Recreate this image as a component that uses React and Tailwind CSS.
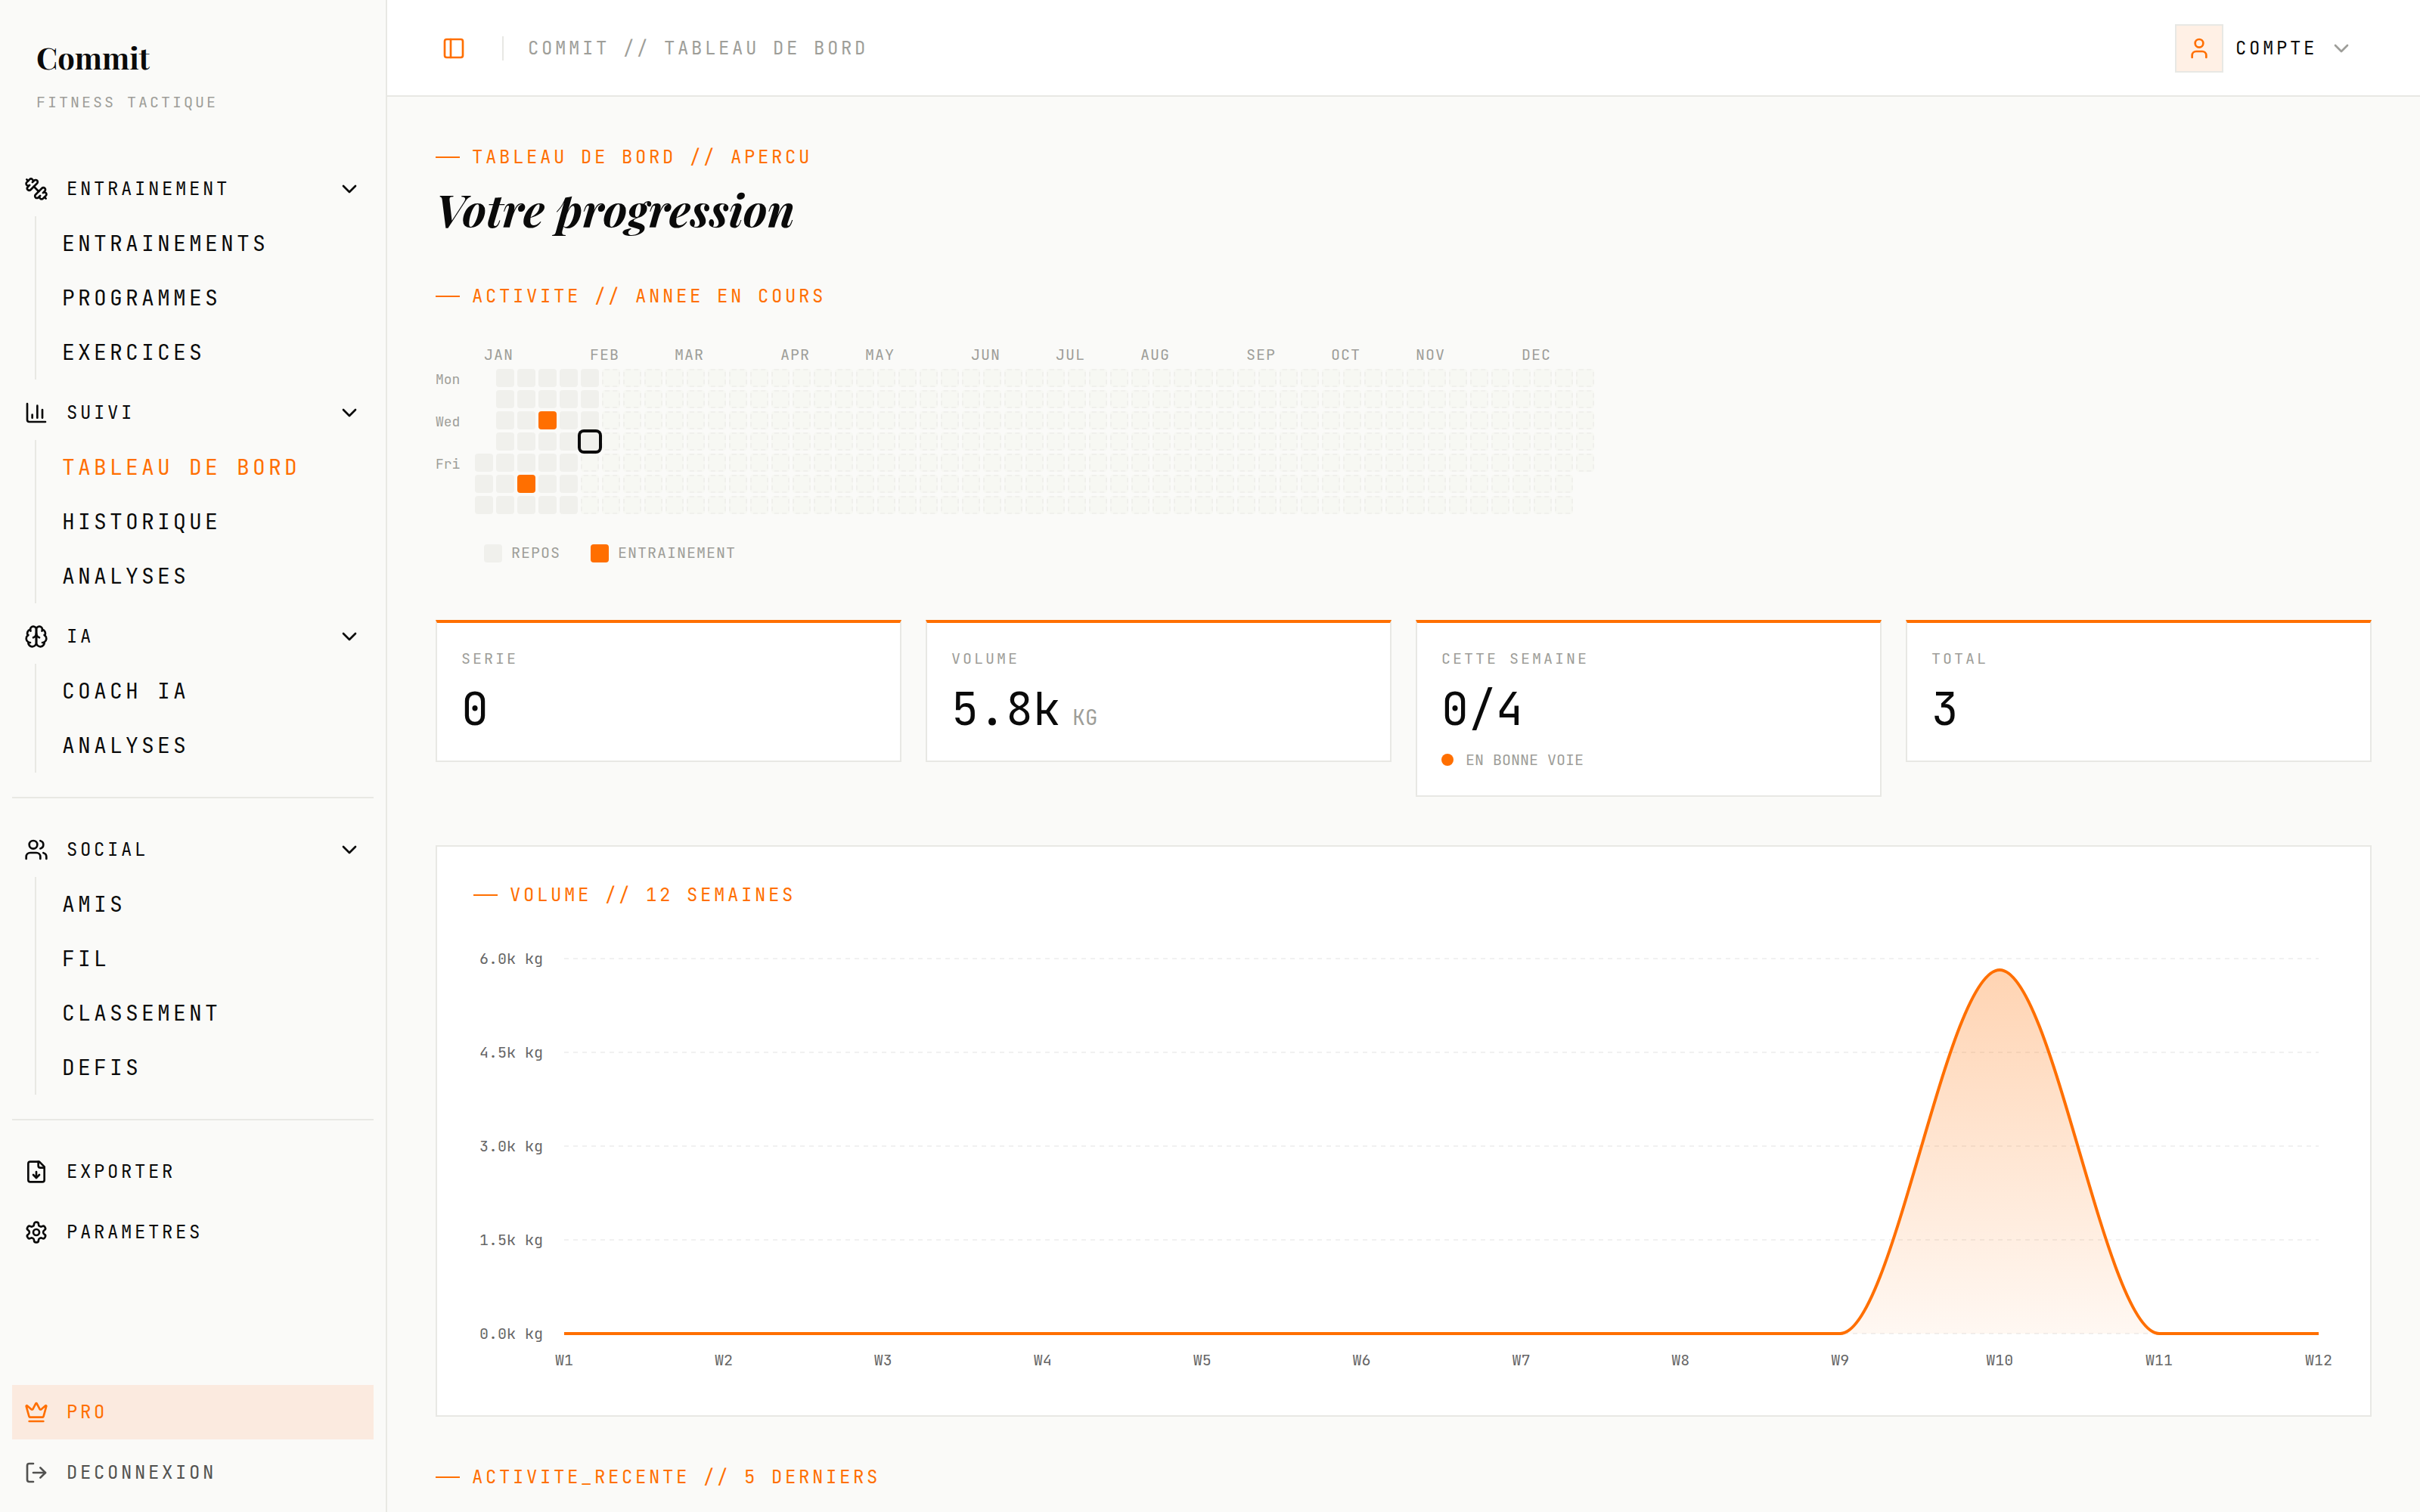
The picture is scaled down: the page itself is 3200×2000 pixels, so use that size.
import React from "react";
import { ChartColumn, ChevronDown, Crown, LogOut, PanelLeft, User, Users } from "lucide-react";

function Glyph({ size = 32, className, children }) {
  return (
    <svg
      width={size}
      height={size}
      viewBox="0 0 24 24"
      fill="none"
      stroke="currentColor"
      strokeWidth="2"
      strokeLinecap="round"
      strokeLinejoin="round"
      aria-hidden="true"
      className={className}
    >
      {children}
    </svg>
  );
}

function DumbbellIcon(props) {
  return (
    <Glyph {...props}>
      <path d="M14.4 14.4 9.6 9.6" />
      <path d="M18.657 21.485a2 2 0 1 1-2.829-2.828l-1.767 1.768a2 2 0 1 1-2.829-2.829l6.364-6.364a2 2 0 1 1 2.829 2.829l-1.768 1.767a2 2 0 1 1 2.828 2.829z" />
      <path d="m21.5 21.5-1.4-1.4" />
      <path d="M3.9 3.9 2.5 2.5" />
      <path d="M6.404 12.768a2 2 0 1 1-2.829-2.829l1.768-1.767a2 2 0 1 1-2.828-2.829l2.828-2.828a2 2 0 1 1 2.829 2.828l1.767-1.768a2 2 0 1 1 2.829 2.829z" />
    </Glyph>
  );
}

function BrainIcon(props) {
  return (
    <Glyph {...props}>
      <path d="M12 5a3 3 0 1 0-5.997.125 4 4 0 0 0-2.526 5.77 4 4 0 0 0 .556 6.588A4 4 0 1 0 12 18Z" />
      <path d="M12 5a3 3 0 1 1 5.997.125 4 4 0 0 1 2.526 5.77 4 4 0 0 1-.556 6.588A4 4 0 1 1 12 18Z" />
      <path d="M15 13a4.5 4.5 0 0 1-3-4 4.5 4.5 0 0 1-3 4" />
      <path d="M17.599 6.5a3 3 0 0 0 .399-1.375" />
      <path d="M6.003 5.125A3 3 0 0 0 6.401 6.5" />
      <path d="M3.477 10.896a4 4 0 0 1 .585-.396" />
      <path d="M19.938 10.5a4 4 0 0 1 .585.396" />
      <path d="M6 18a4 4 0 0 1-1.967-.516" />
      <path d="M19.967 17.484A4 4 0 0 1 18 18" />
    </Glyph>
  );
}

function FileDownIcon(props) {
  return (
    <Glyph {...props}>
      <path d="M15 2H6a2 2 0 0 0-2 2v16a2 2 0 0 0 2 2h12a2 2 0 0 0 2-2V7Z" />
      <path d="M14 2v4a2 2 0 0 0 2 2h4" />
      <path d="M12 18v-6" />
      <path d="m9 15 3 3 3-3" />
    </Glyph>
  );
}

function SettingsIcon(props) {
  return (
    <Glyph {...props}>
      <path d="M12.22 2h-.44a2 2 0 0 0-2 2v.18a2 2 0 0 1-1 1.73l-.43.25a2 2 0 0 1-2 0l-.15-.08a2 2 0 0 0-2.73.73l-.22.38a2 2 0 0 0 .73 2.73l.15.1a2 2 0 0 1 1 1.72v.51a2 2 0 0 1-1 1.74l-.15.09a2 2 0 0 0-.73 2.73l.22.38a2 2 0 0 0 2.73.73l.15-.08a2 2 0 0 1 2 0l.43.25a2 2 0 0 1 1 1.73V20a2 2 0 0 0 2 2h.44a2 2 0 0 0 2-2v-.18a2 2 0 0 1 1-1.73l.43-.25a2 2 0 0 1 2 0l.15.08a2 2 0 0 0 2.73-.73l.22-.39a2 2 0 0 0-.73-2.73l-.15-.08a2 2 0 0 1-1-1.74v-.5a2 2 0 0 1 1-1.74l.15-.09a2 2 0 0 0 .73-2.73l-.22-.38a2 2 0 0 0-2.73-.73l-.15.08a2 2 0 0 1-2 0l-.43-.25a2 2 0 0 1-1-1.73V4a2 2 0 0 0-2-2z" />
      <circle cx="12" cy="12" r="3" />
    </Glyph>
  );
}

const MAIN_GROUPS = [
  { label: "ENTRAINEMENT", icon: DumbbellIcon, items: ["ENTRAINEMENTS", "PROGRAMMES", "EXERCICES"] },
  { label: "SUIVI", icon: ChartColumn, items: ["TABLEAU DE BORD", "HISTORIQUE", "ANALYSES"] },
  { label: "IA", icon: BrainIcon, items: ["COACH IA", "ANALYSES"] },
];

const SOCIAL_GROUPS = [
  { label: "SOCIAL", icon: Users, items: ["AMIS", "FIL", "CLASSEMENT", "DEFIS"] },
];

const ACTIVE_ITEM = "TABLEAU DE BORD";

function NavGroup({ label, icon: Icon, items }) {
  return (
    <div>
      <button type="button" aria-expanded="true" className="flex h-[72px] w-full items-center gap-6 px-4 text-2xl tracking-[0.15em]">
        <Icon size={32} className="shrink-0" />
        <span className="flex-1 text-left">{label}</span>
        <ChevronDown size={32} className="shrink-0" />
      </button>
      <ul className="ml-[30px] border-l-2 border-[#e8e8e4] pl-[34px]">
        {items.map((item) => (
          <li key={item}>
            <a
              href="#"
              aria-current={item === ACTIVE_ITEM ? "page" : undefined}
              className="flex h-[72px] items-center text-[28px] tracking-[0.15em] whitespace-nowrap aria-[current=page]:text-[#ff6f00]"
            >
              {item}
            </a>
          </li>
        ))}
      </ul>
    </div>
  );
}

function NavLink({ label, icon: Icon, className = "" }) {
  return (
    <a href="#" className={"flex h-[72px] items-center gap-6 px-4 text-2xl tracking-[0.15em] " + className}>
      <Icon size={32} className="shrink-0" />
      <span>{label}</span>
    </a>
  );
}

function Divider() {
  return <hr className="my-8 border-t-2 border-[#e8e8e4]" />;
}

function Sidebar() {
  return (
    <aside className="sticky top-0 flex h-screen w-[512px] shrink-0 flex-col border-r-2 border-[#e8e8e4]">
      <div className="p-12">
        <div className="font-['Playfair_Display','Liberation_Serif',serif] text-[40px] leading-[56px] font-bold">Commit</div>
        <div className="mt-4 text-xl leading-[30px] tracking-[0.15em] text-[#9e9e99]">FITNESS TACTIQUE</div>
      </div>
      <nav className="flex flex-1 flex-col p-4">
        <div className="flex flex-col gap-2">
          {MAIN_GROUPS.map((g) => (
            <NavGroup key={g.label} {...g} />
          ))}
        </div>
        <Divider />
        {SOCIAL_GROUPS.map((g) => (
          <NavGroup key={g.label} {...g} />
        ))}
        <Divider />
        <div className="flex flex-col gap-2">
          <NavLink label="EXPORTER" icon={FileDownIcon} />
          <NavLink label="PARAMETRES" icon={SettingsIcon} />
        </div>
        <div className="mt-auto flex flex-col gap-2">
          <NavLink label="PRO" icon={Crown} className="bg-[#fbeadf] text-[#ff6f00]" />
          <NavLink label="DECONNEXION" icon={LogOut} className="text-[#525250]" />
        </div>
      </nav>
    </aside>
  );
}

function TopBar() {
  return (
    <header className="flex h-32 items-center justify-between bg-white px-16 shadow-[inset_0_-2px_0_#e8e8e4]">
      <div className="flex items-center">
        <button type="button" aria-label="Basculer le menu" className="flex size-12 items-center justify-center text-[#ff6f00]">
          <PanelLeft size={32} />
        </button>
        <div className="mr-8 ml-10 h-8 w-0.5 bg-[#e8e8e4]" />
        <span className="text-2xl tracking-[0.15em] text-[#9e9e99]">COMMIT // TABLEAU DE BORD</span>
      </div>
      <button type="button" className="flex items-center gap-4 pr-6 text-2xl tracking-[0.15em]">
        <span className="flex size-16 items-center justify-center border-2 border-[#e8e8e4] bg-[#fff0e5] text-[#ff6f00]">
          <User size={32} />
        </span>
        COMPTE
        <ChevronDown size={32} className="text-[#9e9e99]" />
      </button>
    </header>
  );
}

function Eyebrow({ as: Tag = "h2", children }) {
  return (
    <Tag className="flex items-center gap-4 text-2xl leading-8 tracking-[0.15em] text-[#ff6f00]">
      <span className="h-0.5 w-8 bg-[#ff6f00]" />
      {children}
    </Tag>
  );
}

const MONTHS = [
  ["JAN", 0],
  ["FEB", 5],
  ["MAR", 9],
  ["APR", 14],
  ["MAY", 18],
  ["JUN", 23],
  ["JUL", 27],
  ["AUG", 31],
  ["SEP", 36],
  ["OCT", 40],
  ["NOV", 44],
  ["DEC", 49],
];

const WEEKS = 53;
const FIRST_DAY = 4;
const LAST_DAY = 52 * 7 + 4;
const TODAY = 5 * 7 + 3;
const WORKOUTS = [3 * 7 + 2, 2 * 7 + 5];

const CELL_STYLES = {
  empty: "",
  workout: "bg-[#ff6f00]",
  today: "bg-[#f0f0ec] ring-4 ring-[#0a0a0a] z-10",
  rest: "bg-[#f0f0ec]",
  future: "bg-[#f7f8f3] border-2 border-dashed border-[#f0f0ec]",
};

function cellKind(day) {
  if (day < FIRST_DAY || day > LAST_DAY) return "empty";
  if (WORKOUTS.includes(day)) return "workout";
  if (day === TODAY) return "today";
  return day < TODAY ? "rest" : "future";
}

function Heatmap() {
  return (
    <div className="mt-12">
      <div className="ml-16 grid auto-cols-[24px] grid-flow-col gap-1 text-xl leading-[26px] tracking-[0.05em] text-[#9e9e99]">
        {MONTHS.map(([name, week]) => (
          <span key={name} className="whitespace-nowrap" style={{ gridColumnStart: week + 1 }}>
            {name}
          </span>
        ))}
      </div>
      <div className="mt-1.5 flex gap-2">
        <div className="grid w-11 grid-rows-[repeat(7,24px)] gap-1 text-lg leading-7 text-[#9e9e99]">
          <span>Mon</span>
          <span />
          <span>Wed</span>
          <span />
          <span>Fri</span>
        </div>
        <div className="grid auto-cols-[24px] grid-flow-col grid-rows-[repeat(7,24px)] gap-1">
          {Array.from({ length: WEEKS * 7 }, (_, day) => (
            <div key={day} className={"rounded-sm " + CELL_STYLES[cellKind(day)]} />
          ))}
        </div>
      </div>
      <div className="mt-10 ml-16 flex gap-10 text-xl leading-[22px] tracking-[0.05em] text-[#9e9e99]">
        <div className="flex gap-3">
          <span className="size-6 rounded-sm bg-[#f0f0ec]" />
          REPOS
        </div>
        <div className="flex gap-3">
          <span className="size-6 rounded-sm bg-[#ff6f00]" />
          ENTRAINEMENT
        </div>
      </div>
    </div>
  );
}

const STATS = [
  { label: "SERIE", value: "0" },
  { label: "VOLUME", value: "5.8k", unit: "KG" },
  { label: "CETTE SEMAINE", value: "0/4", note: "EN BONNE VOIE" },
  { label: "TOTAL", value: "3" },
];

function StatCard({ label, value, unit, note }) {
  return (
    <div className="border-2 border-t-4 border-[#e8e8e4] border-t-[#ff6f00] bg-white p-8">
      <div className="text-xl leading-[30px] tracking-[0.15em] text-[#9e9e99]">{label}</div>
      <div className="mt-4 flex items-baseline gap-4 text-6xl leading-[72px]">
        {value}
        {unit && <span className="text-[28px] leading-8 text-[#9e9e99]">{unit}</span>}
      </div>
      {note && (
        <div className="mt-4 flex items-center gap-4 text-xl leading-[30px] text-[#9e9e99]">
          <span className="size-4 rounded-full bg-[#ff6f00]" />
          {note}
        </div>
      )}
    </div>
  );
}

const PLOT = { left: 120, right: 2440, top: 44, bottom: 540 };
const VOLUMES = [0, 0, 0, 0, 0, 0, 0, 0, 0, 5820, 0, 0];
const TICKS = [6000, 4500, 3000, 1500, 0];

function xAt(i) {
  return PLOT.left + ((PLOT.right - PLOT.left) * i) / (VOLUMES.length - 1);
}

function yAt(v) {
  return PLOT.bottom - ((PLOT.bottom - PLOT.top) * v) / 6000;
}

function VolumeChart() {
  const third = (xAt(1) - xAt(0)) / 3;
  const line = VOLUMES.map((v, i) => {
    if (i === 0) return `M${xAt(0)},${yAt(v)}`;
    return `C${xAt(i - 1) + third},${yAt(VOLUMES[i - 1])} ${xAt(i) - third},${yAt(v)} ${xAt(i)},${yAt(v)}`;
  }).join("");
  const area = `${line}L${PLOT.right},${PLOT.bottom}L${PLOT.left},${PLOT.bottom}Z`;

  return (
    <svg viewBox="0 0 2460 600" role="img" aria-label="Volume par semaine" className="mt-6 block h-auto w-full">
      <defs>
        <linearGradient id="volume-fill" x1="0" y1="0" x2="0" y2="1">
          <stop offset="0" stopColor="#ff6f00" stopOpacity="0.3" />
          <stop offset="1" stopColor="#ff6f00" stopOpacity="0.05" />
        </linearGradient>
      </defs>
      {TICKS.map((t) => (
        <g key={t}>
          <line x1={PLOT.left} x2={PLOT.right} y1={yAt(t)} y2={yAt(t)} stroke="#f1f1f1" strokeWidth="2" strokeDasharray="6 6" />
          <text x="92" y={yAt(t) + 7} textAnchor="end" className="fill-[#666666] text-xl">
            {(t / 1000).toFixed(1)}k kg
          </text>
        </g>
      ))}
      <path d={area} fill="url(#volume-fill)" />
      <path d={line} fill="none" stroke="#ff6f00" strokeWidth="4" />
      {VOLUMES.map((_, i) => (
        <text key={i} x={xAt(i)} y="582" textAnchor="middle" className="fill-[#666666] text-xl">
          W{i + 1}
        </text>
      ))}
    </svg>
  );
}

export default function App() {
  return (
    <div className="flex min-h-screen bg-[#fafaf8] font-['JetBrains_Mono','DejaVu_Sans_Mono',monospace] text-[#0a0a0a]">
      <Sidebar />
      <div className="min-w-0 flex-1">
        <TopBar />
        <main className="px-16 pt-16">
          <Eyebrow as="p">TABLEAU DE BORD // APERCU</Eyebrow>
          <h1 className="mt-4 font-['Playfair_Display','Liberation_Serif',serif] text-6xl leading-[72px] font-bold italic">
            Votre progression
          </h1>
          <section className="mt-16">
            <Eyebrow>ACTIVITE // ANNEE EN COURS</Eyebrow>
            <Heatmap />
          </section>
          <section className="mt-[76px] grid grid-cols-4 items-start gap-8">
            {STATS.map((s) => (
              <StatCard key={s.label} {...s} />
            ))}
          </section>
          <section className="mt-16 border-2 border-[#e8e8e4] bg-white p-12">
            <Eyebrow>VOLUME // 12 SEMAINES</Eyebrow>
            <VolumeChart />
          </section>
          <section className="mt-16">
            <Eyebrow>ACTIVITE_RECENTE // 5 DERNIERS</Eyebrow>
          </section>
        </main>
      </div>
    </div>
  );
}
